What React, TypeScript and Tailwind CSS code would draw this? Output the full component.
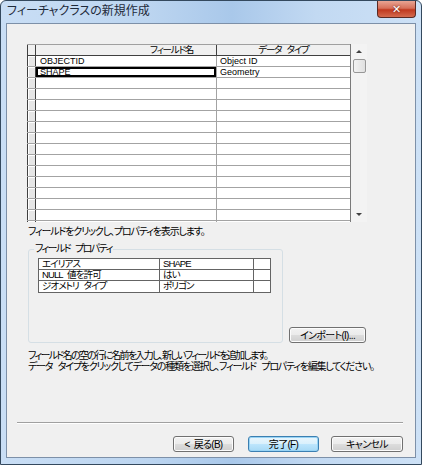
import React from 'react';

const font = "font-['Liberation_Sans','Noto_Sans_CJK_JP',sans-serif] [font-feature-settings:'palt']";

const rows: string[][] = [
  ['OBJECTID', 'Object ID'],
  ['SHAPE', 'Geometry'],
  ...Array.from({ length: 14 }, () => ['', '']),
];

const props = [
  ['エイリアス', 'SHAPE'],
  ['NULL 値を許可', 'はい'],
  ['ジオメトリ タイプ', 'ポリゴン'],
];

function WinButton({ label, w, primary }: { label: string; w: string; primary?: boolean }) {
  return (
    <button
      className={
        'block h-[16px] rounded-[3px] border text-[10px] leading-[13px] tracking-[-0.7px] text-black [word-spacing:2px] ' +
        w +
        (primary
          ? ' border-[#3c7fb1] bg-[linear-gradient(#eaf6fd,#d9f0fc_50%,#bee6fd_50%,#a7d9f5)] shadow-[inset_0_0_0_1px_#98d4f5]'
          : ' border-[#707070] bg-[linear-gradient(#f2f2f2,#ebebeb_50%,#dddddd_50%,#cfcfcf)] shadow-[inset_0_0_0_1px_#fcfcfc]')
      }
    >
      {label}
    </button>
  );
}

function Scrollbar() {
  return (
    <div className="flex h-full w-[16px] flex-col items-center bg-[#f3f3f3]">
      <div className="flex h-[15px] w-full items-center justify-center">
        <div className="h-0 w-0 border-x-[3px] border-b-[3px] border-x-transparent border-b-[#404040]" />
      </div>
      <div className="h-[14px] w-[13px] rounded-[2px] border border-[#979797] bg-[linear-gradient(to_right,#f2f2f2,#e0e0e0)]" />
      <div className="flex-1" />
      <div className="flex h-[15px] w-full items-center justify-center">
        <div className="h-0 w-0 border-x-[3px] border-t-[3px] border-x-transparent border-t-[#404040]" />
      </div>
    </div>
  );
}

export default function App() {
  return (
    <div className={'h-[465px] w-[422px] overflow-hidden ' + font}>
      <div className="flex h-full w-full flex-col rounded-t-[6px] border border-[#34495e] bg-[linear-gradient(to_right,#c9def5,#bcd5f0_35%,#a9c8ea_55%,#c2d9f2_75%,#cde1f6)] px-[5px] pb-[6px]">
        {/* title bar */}
        <div className="flex h-[22px] shrink-0 items-start justify-between">
          <div className="pl-[1px] pt-[3px] text-[12px] leading-[14px] text-[#1e2a3a]">フィーチャクラスの新規作成</div>
          <div className="flex h-[17px] w-[39px] items-center justify-center rounded-b-[4px] border border-t-0 border-[#5a2a24] bg-[linear-gradient(#e8a493,#d6705a_45%,#c0391f_55%,#d46a4e)]">
            <span className="font-['DejaVu_Sans',sans-serif] text-[11px] font-bold leading-none text-white [text-shadow:0_0_2px_#5a1a10]">✕</span>
          </div>
        </div>

        {/* client area */}
        <div className="flex min-h-0 flex-1 flex-col overflow-hidden border border-[#7d90a8] bg-[#f0f0f0] text-black">
          <div className="ml-[20px] mt-[20px] flex h-[178px] shrink-0">
            <div className="h-full w-[324px] overflow-hidden border-r border-[#7a7a7a] bg-white">
              <div className="flex h-[12px] border-b border-t border-b-[#404040] border-t-[#a0a0a0] bg-[#f0f0f0] text-[9.5px] leading-[10px] tracking-[-1.2px]">
                <div className="w-[9px] border-x border-[#404040]" />
                <div className="w-[181px] border-r border-[#404040] pl-[114px]">フィールド名</div>
                <div className="flex-1 text-center [word-spacing:4px]">データ タイプ</div>
              </div>
              {rows.map((r, i) => (
                <div key={i} className="flex h-[11px] border-b border-[#a3a3a3] text-[9px] leading-[10px]">
                  <div className="w-[9px] border-x border-[#404040] bg-[#e6e6e6] shadow-[inset_1px_1px_0_#fff]" />
                  <div
                    className={
                      'w-[181px] border-r border-[#a3a3a3] pl-[4px] ' +
                      (i === 1 ? 'shadow-[inset_0_0_0_2px_#000]' : '')
                    }
                  >
                    {r[0]}
                  </div>
                  <div className="flex-1 pl-[3px]">{r[1]}</div>
                </div>
              ))}
            </div>
            <Scrollbar />
          </div>

          <div className="ml-[21px] mt-[4px] whitespace-nowrap text-[10px] leading-[12px] tracking-[-1.15px]">フィールドをクリックし、プロパティを表示します。</div>

          <div className="ml-[21px] mt-[5px] flex shrink-0 items-end">
            <fieldset className="h-[100px] w-[255px] rounded-[3px] border border-[#d5dfe5] px-[9px]">
              <legend className="ml-[-4px] px-[1px] text-[10px] leading-[12px] tracking-[-1.6px] [word-spacing:4px]">フィールド プロパティ</legend>
              <div className="mt-[3px] w-[233px] border border-[#646464] bg-white text-[9.5px] leading-[10px] tracking-[-0.9px] [word-spacing:3px]">
                {props.map((p, i) => (
                  <div key={i} className={'flex h-[11px] ' + (i < 2 ? 'border-b border-[#646464]' : '')}>
                    <div className="w-[121px] border-r border-[#646464] pl-[3px]">{p[0]}</div>
                    <div className="w-[94px] border-r border-[#646464] pl-[3px]">{p[1]}</div>
                    <div className="flex-1" />
                  </div>
                ))}
              </div>
            </fieldset>
            <div className="ml-[6px]">
              <WinButton label="インポート(I)..." w="w-[77px]" />
            </div>
          </div>

          <div className="ml-[21px] mt-[7px] whitespace-nowrap text-[10px] leading-[11px] [word-spacing:4px]">
            <div className="tracking-[-1.7px]">フィールド名の空の行に名前を入力し、新しいフィールドを追加します。</div>
            <div className="tracking-[-1.25px]">データ タイプをクリックしてデータの種類を選択し、フィールド プロパティを編集してください。</div>
          </div>

          <div className="ml-[10px] mt-[50px] w-[386px] shrink-0 border-b border-t border-b-white border-t-[#a0a0a0]" />

          <div className="mt-[12px] flex shrink-0">
            <div className="ml-[166px]">
              <WinButton label="< 戻る(B)" w="w-[61px]" />
            </div>
            <div className="ml-[14px]">
              <WinButton label="完了(F)" w="w-[71px]" primary />
            </div>
            <div className="ml-[12px]">
              <WinButton label="キャンセル" w="w-[72px]" />
            </div>
          </div>
        </div>
      </div>
    </div>
  );
}
